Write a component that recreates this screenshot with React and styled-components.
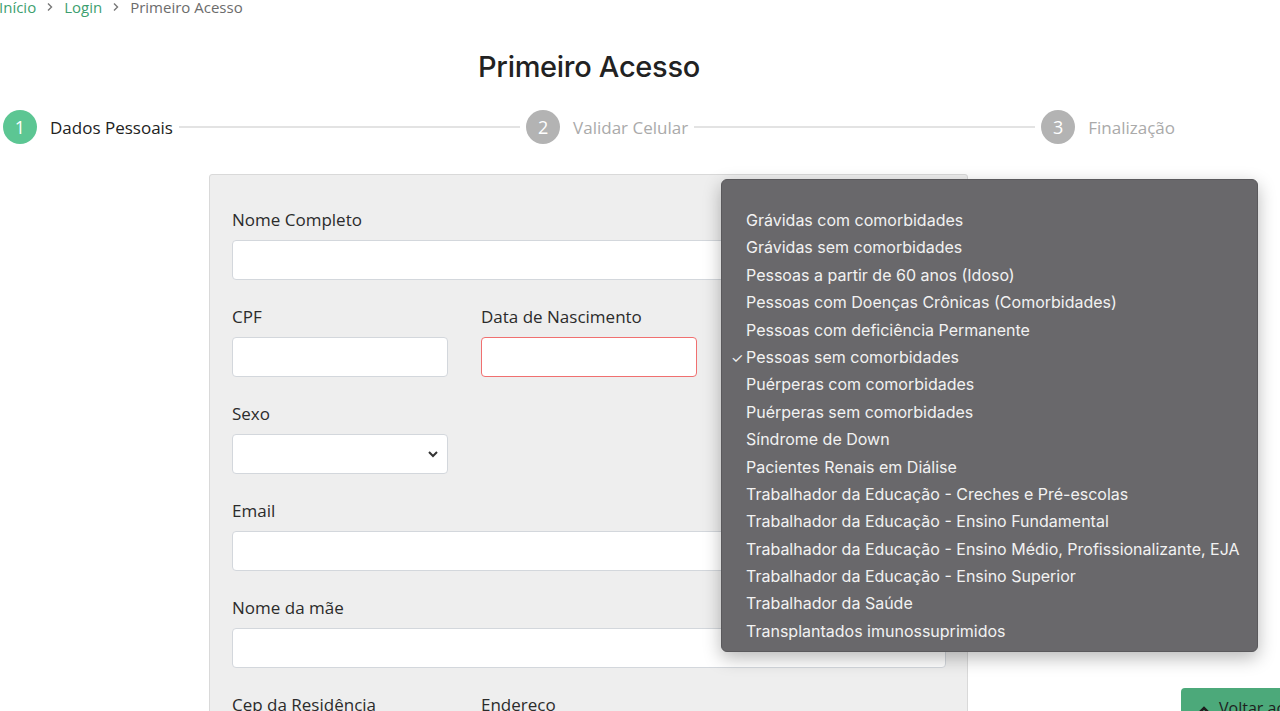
import React from "react";
import styled, { createGlobalStyle } from "styled-components";

const GlobalStyle = createGlobalStyle`
  html, body {
    margin: 0;
    padding: 0;
    background: #ffffff;
    overflow: hidden;
  }
  body {
    font-family: "Open Sans", "Liberation Sans", sans-serif;
    color: #333333;
  }
`;

const Page = styled.div`
  width: 1280px;
  height: 711px;
  position: relative;
  overflow: hidden;
`;

const Content = styled.div`
  width: 1178px;
`;

const Breadcrumb = styled.nav`
  display: flex;
  align-items: center;
  gap: 9px;
  margin: -4px 0 0 -1px;
  height: 22px;
  font-size: 15px;
`;

const Crumb = styled.span`
  color: ${(p) => (p.$link ? "#3d9f6f" : "#6c6c6c")};
`;

const Sep = styled.svg`
  width: 10px;
  height: 10px;
  flex-shrink: 0;
`;

const Title = styled.h1`
  margin: 31px 0 0;
  text-align: center;
  font-family: "Inter", "Open Sans", sans-serif;
  font-size: 29px;
  font-weight: 500;
  letter-spacing: -0.3px;
  color: #222222;
  line-height: 36px;
`;

const Stepper = styled.div`
  display: flex;
  align-items: center;
  width: 1172px;
  margin: 25px 0 0 3px;
`;

const Step = styled.div`
  display: flex;
  align-items: center;
  gap: 13px;
  flex-shrink: 0;
`;

const Circle = styled.div`
  width: 34px;
  height: 34px;
  border-radius: 50%;
  background: ${(p) => (p.$active ? "#5cc693" : "#b3b3b3")};
  color: #ffffff;
  display: flex;
  align-items: center;
  justify-content: center;
  font-size: 18px;
`;

const StepLabel = styled.span`
  font-size: 17px;
  color: ${(p) => (p.$active ? "#222222" : "#aaaaaa")};
`;

const Line = styled.div`
  flex: 1;
  height: 2px;
  background: #e3e3e3;
  margin: 0 6px;
`;

const Card = styled.div`
  width: 714px;
  margin: 30px 0 0 209px;
  background: #eeeeee;
  border: 1px solid #d9d9d9;
  border-radius: 3px;
  padding: 33px 21px 40px 22px;
`;

const Grid = styled.div`
  display: grid;
  grid-template-columns: repeat(3, 216px);
  column-gap: 33px;
`;

const Field = styled.div`
  grid-column: span ${(p) => p.$span || 1};
  margin-bottom: 25px;
  display: flex;
  flex-direction: column;
`;

const Label = styled.label`
  font-size: 17px;
  line-height: 24px;
  color: #2b2b2b;
  margin-bottom: 8px;
`;

const Input = styled.div`
  height: 40px;
  box-sizing: border-box;
  background: #ffffff;
  border: 1px solid ${(p) => (p.$error ? "#f07070" : "#d3d7dc")};
  border-radius: 4px;
  display: flex;
  align-items: center;
  justify-content: flex-end;
  padding-right: 8px;
`;

const Popup = styled.div`
  position: absolute;
  left: 721px;
  top: 179px;
  width: 537px;
  box-sizing: border-box;
  background: #69686b;
  border: 1px solid #5a595c;
  border-radius: 6px;
  box-shadow: 0 6px 18px rgba(0, 0, 0, 0.28);
  padding: 4px 0 6px;
  font-family: "Inter", "Liberation Sans", sans-serif;
  font-size: 16px;
  color: #f2f2f2;
`;

const Option = styled.div`
  height: ${(p) => (p.$blank ? "23px" : "27.4px")};
  line-height: 27.4px;
  padding-left: 24px;
  position: relative;
  white-space: nowrap;
`;

const Check = styled.span`
  position: absolute;
  left: 9px;
  top: 0;
  font-size: 14px;
`;

const TopButton = styled.button`
  position: absolute;
  left: 1181px;
  top: 688px;
  width: 120px;
  height: 40px;
  border: none;
  border-radius: 4px 0 0 0;
  background: #4ca97a;
  color: #1e1e1e;
  font-family: "Open Sans", sans-serif;
  font-size: 16px;
  display: flex;
  align-items: flex-start;
  gap: 8px;
  padding: 9px 0 0 16px;
  white-space: nowrap;
  overflow: hidden;

  svg {
    flex-shrink: 0;
    margin-top: 6px;
  }
`;

const options = [
  "Grávidas com comorbidades",
  "Grávidas sem comorbidades",
  "Pessoas a partir de 60 anos (Idoso)",
  "Pessoas com Doenças Crônicas (Comorbidades)",
  "Pessoas com deficiência Permanente",
  "Pessoas sem comorbidades",
  "Puérperas com comorbidades",
  "Puérperas sem comorbidades",
  "Síndrome de Down",
  "Pacientes Renais em Diálise",
  "Trabalhador da Educação - Creches e Pré-escolas",
  "Trabalhador da Educação - Ensino Fundamental",
  "Trabalhador da Educação - Ensino Médio, Profissionalizante, EJA",
  "Trabalhador da Educação - Ensino Superior",
  "Trabalhador da Saúde",
  "Transplantados imunossuprimidos",
];

const Chevron = () => (
  <Sep viewBox="0 0 10 10">
    <path d="M3 1.5 L6.5 5 L3 8.5" fill="none" stroke="#777" strokeWidth="1.4" />
  </Sep>
);

const App = () => {
  return (
    <>
      <GlobalStyle />
      <Page>
        <Content>
          <Breadcrumb>
            <Crumb $link>Início</Crumb>
            <Chevron />
            <Crumb $link>Login</Crumb>
            <Chevron />
            <Crumb>Primeiro Acesso</Crumb>
          </Breadcrumb>

          <Title>Primeiro Acesso</Title>

          <Stepper>
            <Step>
              <Circle $active>1</Circle>
              <StepLabel $active>Dados Pessoais</StepLabel>
            </Step>
            <Line />
            <Step>
              <Circle>2</Circle>
              <StepLabel>Validar Celular</StepLabel>
            </Step>
            <Line />
            <Step>
              <Circle>3</Circle>
              <StepLabel>Finalização</StepLabel>
            </Step>
          </Stepper>

          <Card>
            <Grid>
              <Field $span={3}>
                <Label>Nome Completo</Label>
                <Input />
              </Field>
              <Field>
                <Label>CPF</Label>
                <Input />
              </Field>
              <Field>
                <Label>Data de Nascimento</Label>
                <Input $error />
              </Field>
              <Field />
              <Field>
                <Label>Sexo</Label>
                <Input>
                  <svg width="12" height="12" viewBox="0 0 12 12">
                    <path d="M2 4 L6 8 L10 4" fill="none" stroke="#333" strokeWidth="2" />
                  </svg>
                </Input>
              </Field>
              <Field $span={2} />
              <Field $span={3}>
                <Label>Email</Label>
                <Input />
              </Field>
              <Field $span={3}>
                <Label>Nome da mãe</Label>
                <Input />
              </Field>
              <Field>
                <Label>Cep da Residência</Label>
                <Input />
              </Field>
              <Field $span={2}>
                <Label>Endereco</Label>
                <Input />
              </Field>
            </Grid>
          </Card>
        </Content>

        <Popup>
          <Option $blank />
          {options.map((o) => (
            <Option key={o}>
              {o === "Pessoas sem comorbidades" && <Check>✓</Check>}
              {o}
            </Option>
          ))}
        </Popup>

        <TopButton>
          <svg width="14" height="14" viewBox="0 0 14 14">
            <path d="M2 10 L7 5 L12 10" fill="none" stroke="#1e1e1e" strokeWidth="2.5" />
          </svg>
          Voltar ao topo
        </TopButton>
      </Page>
    </>
  );
};

export default App;
